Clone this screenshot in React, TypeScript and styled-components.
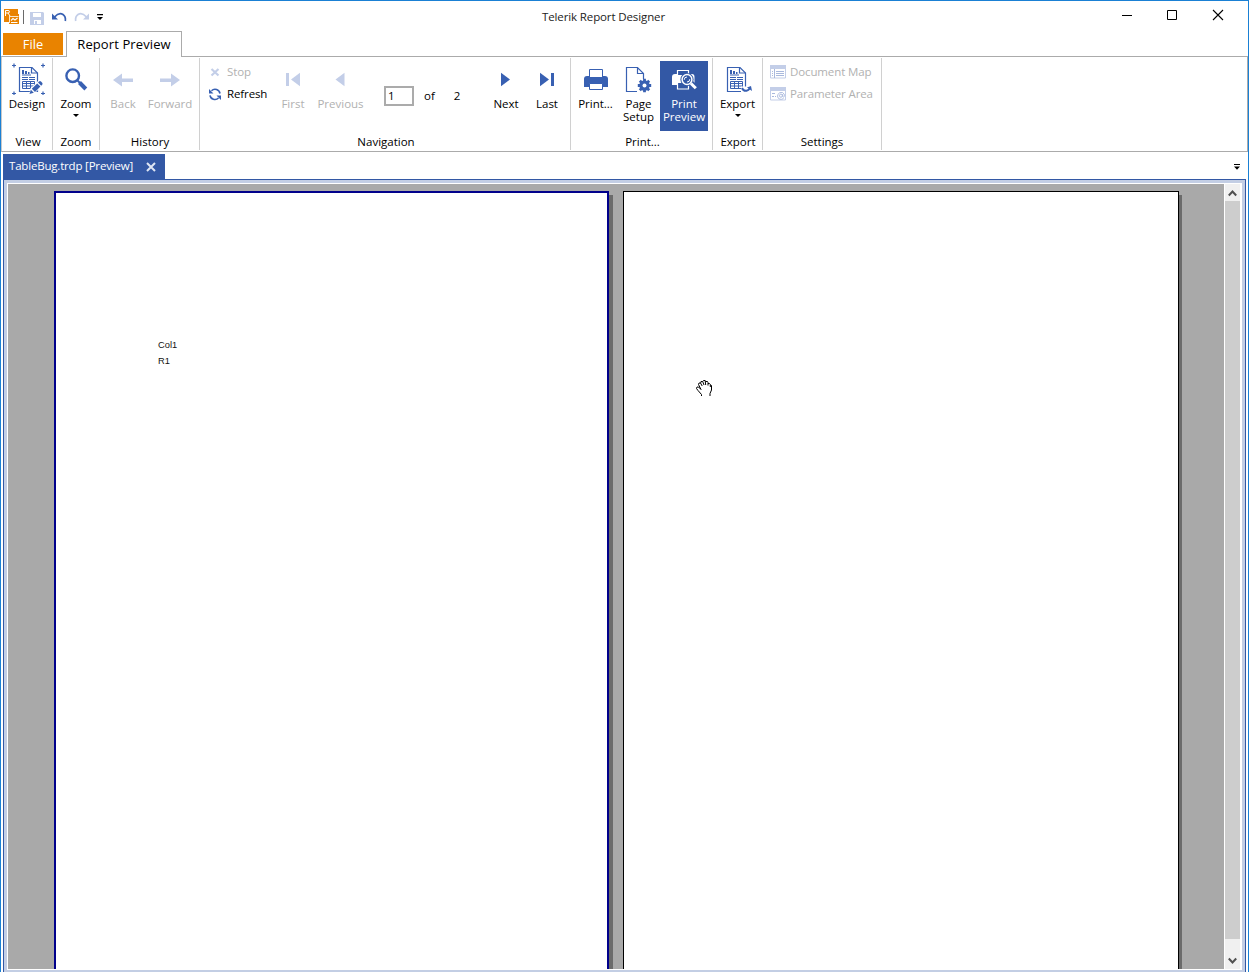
import React from "react";
import styled, { createGlobalStyle } from "styled-components";

const BLUE = "#3358a5";
const ICON = "#3860b2";
const PALE = "#c3cee8";

const Global = createGlobalStyle`
  * { box-sizing: border-box; }
  html, body { margin: 0; background: #fff; overflow: hidden; }
  body { font-family: "Open Sans", "Noto Sans", sans-serif; font-size: 11.5px; color: #000; }
  svg { display: block; flex: none; }
`;

const Window = styled.div`
  width: 1249px;
  height: 972px;
  display: flex;
  flex-direction: column;
  border: 1px solid #1a80d4;
  border-bottom: 0;
  background: #fff;
`;

const TitleBar = styled.header`
  height: 30px;
  display: grid;
  grid-template-columns: 400px 1fr 400px;
  flex: none;
`;

const QuickAccess = styled.div`
  display: flex;
  align-items: flex-start;
  padding: 8px 0 0 3px;
`;

const QuickButton = styled.span<{ $gap: number }>`
  display: block;
  margin-left: ${(p) => p.$gap}px;
`;

const Divider = styled.i`
  width: 1px;
  height: 14px;
  margin: 1px 6px 0 3px;
  background: #6a6a6a;
`;

const Title = styled.div`
  text-align: center;
  line-height: 32px;
  padding-right: 42px;
  white-space: nowrap;
  color: #222;
  letter-spacing: -0.12px;
`;

const Controls = styled.div`
  display: flex;
  justify-content: flex-end;
  padding: 8px 22px 0 0;
  gap: 30px;
`;

const TabStrip = styled.nav`
  display: flex;
  height: 26px;
  flex: none;
  position: relative;
  z-index: 1;
  margin-bottom: -1px;
`;

const FileTab = styled.button`
  width: 60px;
  height: 22px;
  margin: 2px 3px 0 2px;
  padding: 0;
  border: 0;
  background: #e98300;
  color: #fff;
  font: 12.8px/20px "Open Sans", sans-serif;
`;

const ActiveTab = styled.div`
  width: 116px;
  height: 26px;
  border: 1px solid #ababab;
  border-bottom: 0;
  background: #fff;
  text-align: center;
  font-size: 13px;
  letter-spacing: 0.1px;
  line-height: 25px;
  white-space: nowrap;
`;

const Ribbon = styled.section`
  height: 96px;
  flex: none;
  display: flex;
  border: 1px solid #ababab;
  border-left-color: #c8c8c8;
  padding: 1px 0;
`;

const Group = styled.div<{ $w: number }>`
  width: ${(p) => p.$w}px;
  height: 92px;
  flex: none;
  display: flex;
  flex-direction: column;
  border-right: 1px solid #d0d0d0;
`;

const GroupBody = styled.div<{ $pad?: number }>`
  flex: 1;
  display: flex;
  align-items: flex-start;
  padding: 3px 0 0 ${(p) => p.$pad ?? 0}px;
`;

const GroupName = styled.div<{ $shift?: number }>`
  height: 16px;
  padding-left: ${(p) => p.$shift ?? 0}px;
  text-align: center;
  line-height: 16px;
  white-space: nowrap;
`;

const BigButton = styled.button<{ $w: number; $off?: boolean; $on?: boolean; $ml?: number }>`
  width: ${(p) => p.$w}px;
  height: 70px;
  margin: 0 0 0 ${(p) => p.$ml ?? 0}px;
  padding: 2px 0 0;
  border: 0;
  flex: none;
  display: flex;
  flex-direction: column;
  align-items: center;
  background: ${(p) => (p.$on ? BLUE : "transparent")};
  color: ${(p) => (p.$on ? "#fff" : p.$off ? "#b1b1b1" : "#000")};
  font: 11.5px/13px "Open Sans", sans-serif;
  white-space: nowrap;
  svg { margin-bottom: 2px; }
`;

const Caret = styled.i`
  width: 0;
  height: 0;
  margin-top: 4px;
  border: 3px solid transparent;
  border-top-color: #000;
  border-bottom: 0;
`;

const Stack = styled.div<{ $w: number }>`
  width: ${(p) => p.$w}px;
  flex: none;
  display: flex;
  flex-direction: column;
`;

const SmallButton = styled.button<{ $off?: boolean }>`
  height: 22px;
  padding: 0;
  border: 0;
  background: none;
  display: flex;
  align-items: center;
  gap: 4px;
  color: ${(p) => (p.$off ? "#b1b1b1" : "#000")};
  font: 11.5px/22px "Open Sans", sans-serif;
  letter-spacing: -0.12px;
  white-space: nowrap;
`;

const PageInput = styled.input`
  width: 30px;
  height: 20px;
  margin: 25px 0 0 14px;
  padding: 0 0 1px 2px;
  border: 2px solid #ababab;
  font: 11.5px "Open Sans", sans-serif;
  color: #000;
`;

const PageText = styled.span<{ $w: number }>`
  width: ${(p) => p.$w}px;
  margin-top: 27px;
  text-align: center;
  line-height: 16px;
`;

const DocBar = styled.div`
  height: 27px;
  flex: none;
  display: flex;
  justify-content: space-between;
  align-items: flex-end;
  padding: 0 8px 0 2px;
`;

const DocTab = styled.div`
  width: 162px;
  height: 25px;
  display: flex;
  align-items: center;
  justify-content: space-between;
  padding: 0 9px 0 6px;
  background: ${BLUE};
  color: #fff;
  letter-spacing: -0.19px;
  line-height: 23px;
  white-space: nowrap;
`;

const DocTitle = styled.span`
  height: 25px;
`;

const DocMenu = styled.span`
  align-self: center;
  padding-top: 3px;
`;

const Frame = styled.main`
  flex: 1;
  min-height: 0;
  margin: 0 2px;
  border: 1px solid ${BLUE};
  border-bottom: 0;
  background: #c3cee4;
  padding: 3px 3px 2px;
  display: flex;
`;

const Viewer = styled.div`
  flex: 1;
  display: flex;
  border: 1px solid #fff;
  border-right-width: 2px;
  background: #a9a9a9;
  overflow: hidden;
`;

const Pages = styled.div`
  flex: 1;
  display: flex;
  gap: 14px;
  padding: 7px 0 0 46px;
  overflow: hidden;
`;

const Page = styled.article<{ $w: number; $active?: boolean }>`
  width: ${(p) => p.$w}px;
  height: 800px;
  flex: none;
  background: #fff;
  border: ${(p) => (p.$active ? "2px solid #00008b" : "1px solid #000")};
  box-shadow: ${(p) => (p.$active ? 4 : 3)}px 4px 0 #6b6b6b;
  font: 9.3px/16px "Liberation Sans", Arial, sans-serif;
  color: #111;
  padding: 144px 0 0 102px;
`;

const ScrollBar = styled.div`
  width: 16px;
  border-left: 1px solid #fff;
  background: #f0f0f0;
  display: flex;
  flex-direction: column;
`;

const Arrow = styled.div<{ $down?: boolean }>`
  height: 17px;
  margin-top: ${(p) => (p.$down ? "auto" : 0)};
  padding-top: ${(p) => (p.$down ? 0 : 1)}px;
  display: flex;
  align-items: center;
  justify-content: center;
`;

const Thumb = styled.div`
  height: 738px;
  background: #cdcdcd;
`;

const HandCursor = styled.svg`
  position: absolute;
  left: 696px;
  top: 380px;
`;

const Sheet = () => (
  <>
    <path d="M.5.5h12.500l5.500 5.500v18.500H.5z" fill="#fff" stroke={ICON} strokeWidth="1.200" />
    <path d="M12.500.5v5.500h6" fill="none" stroke={ICON} strokeWidth="1.200" />
    <path d="M3 3h2v4H3zM6 4h2v3H6zM9 5h1.500v2H9zM3 7.500h9v1H3zM3 10h6v1H3zM3 12h6v1H3zM10 10h6v1h-6zM10 12h6v1h-6z" fill={ICON} />
    <path d="M3.500 14.500h12v7h-12zM3 16.500h13M3 19h13M7.500 14v8M11.500 14v8" fill="none" stroke={ICON} />
  </>
);

const DesignIcon = () => (
  <svg width="36" height="32">
    <path d="M3 2.500h4M5 .5v4M32 2.500h4M34 .5v4M3 30.500h4M5 28.500v4M32 30.500h4M34 28.500v4" stroke={ICON} strokeWidth="1.200" fill="none" />
    <g transform="translate(10 4)"><Sheet /></g>
    <path d="M20 32l1.500-6.500L30 17l4.500 4.500-9 9z" fill="#fff" />
    <path d="M20.500 31l1.300-4.300 3 3zM22.800 25.800l5.400-5.400 3.200 3.200-5.400 5.400zM29 19.500l1-1q1-.8 2 0l1.200 1.200q.8 1 0 2l-1 1z" fill={ICON} />
  </svg>
);

const ZoomIcon = () => (
  <svg width="32" height="32">
    <circle cx="12.700" cy="12.700" r="6.300" fill="none" stroke={ICON} strokeWidth="2.400" />
    <path d="M17 17l3 3" stroke={ICON} strokeWidth="2" />
    <path d="M19.500 19.500l6.300 6.500" stroke={ICON} strokeWidth="4" />
  </svg>
);

const ArrowIcon = ({ flip }: { flip?: boolean }) => (
  <svg width="20" height="32">
    <path transform={flip ? "translate(20 0) scale(-1 1)" : undefined} d="M0 17l9-6.500v5h11v3.500H9v4.500z" fill={PALE} />
  </svg>
);

const NavIcon = ({ color, flip, bar }: { color: string; flip?: boolean; bar?: boolean }) => (
  <svg width="14" height="32">
    <g transform={flip ? "translate(14 0) scale(-1 1)" : undefined} fill={color}>
      <path d={bar ? "M0 9.800l9 6.700-9 6.700z" : flip ? "M3.500 9.800l9 6.700-9 6.700z" : "M2 9.800l9 6.700-9 6.700z"} />
      {bar && <path d="M11 10h3v13h-3z" />}
    </g>
  </svg>
);

const PrintIcon = () => (
  <svg width="25" height="32">
    <path d="M1 16q0-3 3-3h18q3 0 3 3v8H1z" fill={ICON} />
    <path d="M6.500 6.500h13v8h-13zM6.500 20.500h13v6h-13z" fill="#fff" stroke={ICON} />
    <path d="M6 14h14v2H6z" fill={ICON} />
  </svg>
);

const PageSetupIcon = () => (
  <svg width="27" height="32">
    <path d="M12 28.500H1.500V4.500h11l6 6V16M12.500 4.500v6h6" fill="none" stroke={ICON} strokeWidth="1.200" />
    <path
      d="M19.500 15.800v13.400M12.800 22.500h13.400M14.800 17.800l9.400 9.400M24.200 17.800l-9.400 9.400"
      stroke={ICON}
      strokeWidth="2.800"
    />
    <circle cx="19.500" cy="22.500" r="5.200" fill={ICON} />
    <circle cx="19.500" cy="22.500" r="2" fill="#fff" />
  </svg>
);

const PreviewIcon = () => (
  <svg width="26" height="32">
    <path d="M1 14q0-3 3-3h17q2.500 0 2.500 3v8H1z" fill="#fff" />
    <path d="M6.500 7.500h11v5h-11z" fill={BLUE} stroke="#fff" strokeWidth="1.200" />
    <path d="M6.500 19.500h11v6.500h-11z" fill={BLUE} stroke="#fff" strokeWidth="1.200" />
    <circle cx="16" cy="16.500" r="6.600" fill={BLUE} />
    <path d="M19 19l7 7" stroke={BLUE} strokeWidth="5.500" />
    <circle cx="16" cy="16.500" r="4.900" fill={BLUE} stroke="#fff" strokeWidth="1.500" />
    <path d="M13.200 16.800a2.800 2.800 0 0 1 2.800-2.800M18.800 16.200a2.800 2.800 0 0 1-2.800 2.800" stroke="#fff" fill="none" />
    <path d="M20 20.500l4.800 4.800" stroke="#fff" strokeWidth="3" />
  </svg>
);

const ExportIcon = () => (
  <svg width="29" height="32">
    <g transform="translate(4 4)"><Sheet /></g>
    <path d="M18 23.500h11V32H18z" fill="#fff" />
    <path d="M19 25q1.500 3.200 4.500 2.700 2-.4 3-2" stroke={ICON} strokeWidth="2" fill="none" />
    <path d="M24 24.500l4-1.500 1 5z" fill={ICON} />
  </svg>
);

const StopIcon = () => (
  <svg width="15" height="14">
    <path d="M3.500 4l7 6.500M10.500 4l-7 6.500" stroke={PALE} strokeWidth="2.200" />
  </svg>
);

const RefreshIcon = () => (
  <svg width="15" height="14">
    <path d="M3.500 3.800A5 5 0 0 1 12 6.500M10.500 11A5 5 0 0 1 2 8.300" fill="none" stroke={ICON} strokeWidth="1.600" />
    <path d="M1 2v4.500h4.500zM13 13V8.500H8.500z" fill={ICON} />
  </svg>
);

const PanelIcon = ({ at }: { at?: boolean }) => (
  <svg width="16" height="14">
    <path d="M.5.5h15v12.500H.5z" fill="#fff" stroke={PALE} />
    <path d="M0 0h16v4H0z" fill={PALE} />
    {at ? (
      <>
        <path d="M2 6h3v1H2zM2 9h2v1H2zM5 9h1v1H5z" fill="#a9b9dd" />
        <path d="M13.500 11.500q-2 1.500-4.300.5-2.500-1.800-1.400-4.500 1.700-2.700 4.700-2 2.500 1.200 1.800 4-1.300 1.500-1.800-.2V7.200M12.300 8.700a1.400 1.600 0 1 1-2.800 0 1.400 1.600 0 1 1 2.800 0" fill="none" stroke="#b0bee0" />
      </>
    ) : (
      <path d="M2 6h1v1H2zM2 8h1v1H2zM2 10h1v1H2zM4 4h1v9H4zM6 6h8v1H6zM6 8h8v1H6zM6 10h8v1H6z" fill="#a9b9dd" />
    )}
  </svg>
);

const OverflowMark = () => (
  <svg width="6" height="6">
    <path d="M0 0h6v1H0zM0 2.500h6l-3 3.300z" fill="#000" />
  </svg>
);

const QuickIcons = () => (
  <>
    <svg width="16" height="16">
      <path d="M0 0h14v5h1v10H5v-2H0z" fill="#e98300" />
      <path d="M1.500 7V1.500H4q1.500 0 1.500 1.200T4 4H2M4 4l2 3" stroke="#fff" fill="none" />
      <path d="M6 7.500h8.500M5.500 7v7" fill="none" stroke="#fff" strokeWidth=".8" />
      <path d="M7 11.500l2-2 2 1.500L13.500 9M7 13.500h6.500" fill="none" stroke="#fff" strokeWidth="1.100" />
    </svg>
    <Divider />
    <svg width="14" height="16">
      <path d="M0 3h13l1 1v12H0z" fill={PALE} />
      <path d="M3 4h8v4H3zM4 11h7v4H4z" fill="#fff" />
      <path d="M5 12h2v3H5z" fill={PALE} />
    </svg>
    <QuickButton $gap={8}>
      <svg width="15" height="16">
        <path d="M2.500 8Q7 3 11 5.500q3 2.200 2.300 6.500" fill="none" stroke={ICON} strokeWidth="1.700" />
        <path d="M0 4.500v6h6z" fill={ICON} />
      </svg>
    </QuickButton>
    <QuickButton $gap={7}>
      <svg width="15" height="16">
        <path d="M12.500 8Q8 3 4 5.500 1 7.700 1.700 12" fill="none" stroke={PALE} strokeWidth="1.700" />
        <path d="M15 4.500v6H9z" fill={PALE} />
      </svg>
    </QuickButton>
    <QuickButton $gap={8}>
      <svg width="6" height="12">
        <path d="M0 5h6v1.300H0zM0 8h6l-3 3z" fill="#000" />
      </svg>
    </QuickButton>
  </>
);

export default function App() {
  return (
    <>
      <Global />
      <Window>
        <TitleBar>
          <QuickAccess><QuickIcons /></QuickAccess>
          <Title>Telerik Report Designer</Title>
          <Controls>
            <svg width="16" height="14"><path d="M4 6h10v1H4z" fill="#000" /></svg>
            <svg width="16" height="14"><path d="M3.500 1.500h9v9h-9z" fill="none" stroke="#000" /></svg>
            <svg width="16" height="14"><path d="M3 1l10 10M13 1L3 11" fill="none" stroke="#000" strokeWidth="1.100" /></svg>
          </Controls>
        </TitleBar>
        <TabStrip>
          <FileTab>File</FileTab>
          <ActiveTab>Report Preview</ActiveTab>
        </TabStrip>
        <Ribbon>
          <Group $w={51}>
            <GroupBody>
              <BigButton $w={50}><DesignIcon />Design</BigButton>
            </GroupBody>
            <GroupName $shift={2}>View</GroupName>
          </Group>
          <Group $w={47}>
            <GroupBody>
              <BigButton $w={46}><ZoomIcon />Zoom<Caret /></BigButton>
            </GroupBody>
            <GroupName>Zoom</GroupName>
          </Group>
          <Group $w={100}>
            <GroupBody>
              <BigButton $w={46} $off><ArrowIcon />Back</BigButton>
              <BigButton $w={48} $off><ArrowIcon flip />Forward</BigButton>
            </GroupBody>
            <GroupName $shift={1}>History</GroupName>
          </Group>
          <Group $w={371}>
            <GroupBody $pad={8}>
              <Stack $w={67}>
                <SmallButton $off><StopIcon />Stop</SmallButton>
                <SmallButton><RefreshIcon />Refresh</SmallButton>
              </Stack>
              <BigButton $w={36} $off><NavIcon color={PALE} flip bar />First</BigButton>
              <BigButton $w={59} $off><NavIcon color={PALE} flip />Previous</BigButton>
              <PageInput defaultValue="1" />
              <PageText $w={31}>of</PageText>
              <PageText $w={24}>2</PageText>
              <BigButton $w={42} $ml={16}><NavIcon color={ICON} />Next</BigButton>
              <BigButton $w={40}><NavIcon color={ICON} bar />Last</BigButton>
            </GroupBody>
            <GroupName $shift={2}>Navigation</GroupName>
          </Group>
          <Group $w={142}>
            <GroupBody $pad={3}>
              <BigButton $w={43}><PrintIcon />Print...</BigButton>
              <BigButton $w={43}><PageSetupIcon />Page<span>Setup</span></BigButton>
              <BigButton $w={48} $on><PreviewIcon />Print<span>Preview</span></BigButton>
            </GroupBody>
            <GroupName $shift={2}>Print...</GroupName>
          </Group>
          <Group $w={50}>
            <GroupBody>
              <BigButton $w={49}><ExportIcon />Export<Caret /></BigButton>
            </GroupBody>
            <GroupName $shift={1}>Export</GroupName>
          </Group>
          <Group $w={119}>
            <GroupBody $pad={7}>
              <Stack $w={108}>
                <SmallButton $off><PanelIcon />Document Map</SmallButton>
                <SmallButton $off><PanelIcon at />Parameter Area</SmallButton>
              </Stack>
            </GroupBody>
            <GroupName>Settings</GroupName>
          </Group>
        </Ribbon>
        <DocBar>
          <DocTab>
            <DocTitle>TableBug.trdp [Preview]</DocTitle>
            <svg width="10" height="10"><path d="M1 1l8 8M9 1L1 9" stroke="#dfe6f4" strokeWidth="2" /></svg>
          </DocTab>
          <DocMenu><OverflowMark /></DocMenu>
        </DocBar>
        <Frame>
          <Viewer>
            <Pages>
              <Page $w={555} $active>
                <div>Col1</div>
                <div>R1</div>
              </Page>
              <Page $w={556} />
            </Pages>
            <ScrollBar>
              <Arrow><svg width="9" height="7"><path d="M.8 5.500l3.700-4 3.700 4" fill="none" stroke="#505050" strokeWidth="2" /></svg></Arrow>
              <Thumb />
              <Arrow $down><svg width="9" height="7"><path d="M.8 1.500l3.700 4 3.700-4" fill="none" stroke="#505050" strokeWidth="2" /></svg></Arrow>
            </ScrollBar>
          </Viewer>
        </Frame>
      </Window>
      <HandCursor width="18" height="18">
        <path d="M5.500 16v-1.500l-3.500-4-1.500-2 .5-1.500h1.500L5 9.500 2.500 4.500l.5-1.500h1.500l1.700 3M4.700 3l.3-1.500h1.700L8 5M6.800 1.500L7.500.5h1.700l.5 4.500M9.500 1.500h2l.5 1v3M12 3.500h1.500l.8 1V7M14.300 5l1.200.5V10l-1.500 3.500V16" fill="none" stroke="#000" />
      </HandCursor>
    </>
  );
}
